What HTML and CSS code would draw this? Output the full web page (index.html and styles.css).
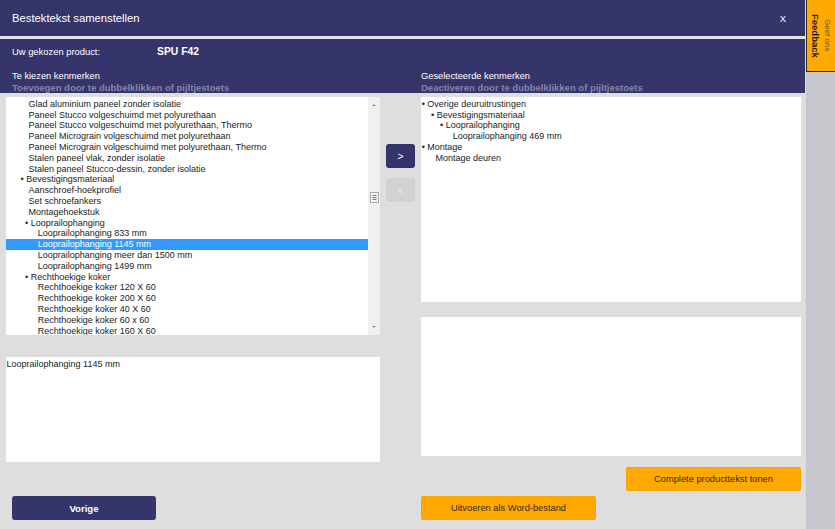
FILE: index.html
```html
<!DOCTYPE html>
<html lang="nl">
<head>
<meta charset="utf-8">
<title>Bestektekst samenstellen</title>
<link rel="stylesheet" href="styles.css">
</head>
<body>
<div class="app">
  <main class="dialog">
    <header class="titlebar">
      <span class="title">Bestektekst samenstellen</span>
      <span class="close">X</span>
    </header>
    <div class="titlesep"></div>
    <section class="infobar">
      <div class="product">
        <span class="product-label">Uw gekozen product:</span>
        <span class="product-name">SPU F42</span>
      </div>
      <div class="labels">
        <div class="label-col">
          <div class="label-main">Te kiezen kenmerken</div>
          <div class="label-hint">Toevoegen door te dubbelklikken of pijltjestoets</div>
        </div>
        <div class="label-col">
          <div class="label-main">Geselecteerde kenmerken</div>
          <div class="label-hint">Deactiveren door te dubbelklikken of pijltjestoets</div>
        </div>
      </div>
    </section>
    <section class="content">
      <div class="col-left">
        <div class="listbox">
          <ul class="tree">
            <li class="ind-e">Glad aluminium paneel zonder isolatie</li>
            <li class="ind-e">Paneel Stucco volgeschuimd met polyurethaan</li>
            <li class="ind-e">Paneel Stucco volgeschuimd met polyurethaan, Thermo</li>
            <li class="ind-e">Paneel Micrograin volgeschuimd met polyurethaan</li>
            <li class="ind-e">Paneel Micrograin volgeschuimd met polyurethaan, Thermo</li>
            <li class="ind-e">Stalen paneel vlak, zonder isolatie</li>
            <li class="ind-e">Stalen paneel Stucco-dessin, zonder isolatie</li>
            <li class="ind-c">• Bevestigingsmateriaal</li>
            <li class="ind-e">Aanschroef-hoekprofiel</li>
            <li class="ind-e">Set schroefankers</li>
            <li class="ind-e">Montagehoekstuk</li>
            <li class="ind-d">• Looprailophanging</li>
            <li class="ind-f">Looprailophanging 833 mm</li>
            <li class="ind-f selected">Looprailophanging 1145 mm</li>
            <li class="ind-f">Looprailophanging meer dan 1500 mm</li>
            <li class="ind-f">Looprailophanging 1499 mm</li>
            <li class="ind-d">• Rechthoekige koker</li>
            <li class="ind-f">Rechthoekige koker 120 X 60</li>
            <li class="ind-f">Rechthoekige koker 200 X 60</li>
            <li class="ind-f">Rechthoekige koker 40 X 60</li>
            <li class="ind-f">Rechthoekige koker 60 x 60</li>
            <li class="ind-f">Rechthoekige koker 160 X 60</li>
          </ul>
          <div class="scrollbar">
            <div class="sb-btn"><span class="tri-up"></span></div>
            <div class="sb-track">
              <svg class="sb-thumb" width="9" height="11" viewBox="0 0 9 11">
                <rect x="0.5" y="0.5" width="8" height="10" fill="#f4f4f4" stroke="#a8a8a8"/>
                <path d="M2.5 3.5h4M2.5 5.5h4M2.5 7.5h4" stroke="#777" stroke-width="1"/>
              </svg>
            </div>
            <div class="sb-btn"><span class="tri-down"></span></div>
          </div>
        </div>
        <div class="textbox">Looprailophanging 1145 mm</div>
        <button class="btn btn-navy btn-prev">Vorige</button>
      </div>
      <div class="col-mid">
        <button class="arrow arrow-add">&gt;</button>
        <button class="arrow arrow-remove" disabled>&lt;</button>
      </div>
      <div class="col-right">
        <ul class="tree tree-selected">
          <li class="ind-a">• Overige deuruitrustingen</li>
          <li class="ind-b">• Bevestigingsmateriaal</li>
          <li class="ind-d">• Looprailophanging</li>
          <li class="ind-f">Looprailophanging 469 mm</li>
          <li class="ind-a">• Montage</li>
          <li class="ind-c">Montage deuren</li>
        </ul>
        <div class="box"></div>
        <button class="btn btn-orange btn-complete">Complete producttekst tonen</button>
        <button class="btn btn-orange btn-word">Uitvoeren als Word-bestand</button>
      </div>
    </section>
  </main>
  <aside class="sidebar">
    <div class="feedback">
      <span class="fb-small">Geef ons</span>
      <span class="fb-big">Feedback</span>
    </div>
  </aside>
</div>
</body>
</html>
```

FILE: styles.css
```css
* {
  box-sizing: border-box;
  margin: 0;
  padding: 0;
}

html, body {
  width: 835px;
  height: 529px;
  overflow: hidden;
}

body {
  font-family: "Liberation Sans", Arial, sans-serif;
  background: #dedede;
  color: #222;
}

.app {
  display: flex;
  height: 529px;
}

.dialog {
  width: 805px;
  display: flex;
  flex-direction: column;
}

/* Title bar */
.titlebar {
  height: 36px;
  background: #35346b;
  color: #fff;
  display: flex;
  align-items: center;
  justify-content: space-between;
  padding: 0 19px 0 12px;
}

.title {
  font-size: 11.25px;
}

.close {
  font-size: 9.5px;
}

.titlesep {
  height: 3px;
  background: #e2e2e6;
}

/* Info band */
.infobar {
  height: 54px;
  background: #35346b;
  color: #fff;
  padding: 6px 0 0 12px;
}

.product {
  display: flex;
  height: 13px;
  line-height: 13px;
  font-size: 9.4px;
}

.product-label {
  width: 145px;
}

.product-name {
  font-weight: bold;
  font-size: 10.35px;
}

.labels {
  display: grid;
  grid-template-columns: 409px 1fr;
  margin-top: 12.5px;
}

.label-main {
  font-size: 9.3px;
  line-height: 11px;
}

.label-hint {
  font-size: 9.5px;
  line-height: 11px;
  font-weight: bold;
  color: #8584a6;
}

/* Content */
.content {
  flex: 1;
  display: grid;
  grid-template-columns: 375px 40px 380px;
  padding: 4px 0 0 6px;
  align-items: start;
}

.col-left,
.col-mid,
.col-right {
  display: flex;
  flex-direction: column;
  align-items: flex-start;
}

.listbox {
  width: 374px;
  height: 238px;
  display: flex;
  background: #fff;
}

.tree {
  list-style: none;
  background: #fff;
  font-size: 9px;
  line-height: 10.8px;
  padding-top: 1.8px;
  overflow: hidden;
  white-space: nowrap;
  color: #222;
}

.listbox .tree {
  width: 362px;
  flex: none;
}

.tree li {
  height: 10.8px;
}

.tree li.selected {
  background: #3399ff;
  color: #fff;
}

.ind-a { padding-left: 0.7px; }
.ind-b { padding-left: 10px; }
.ind-c { padding-left: 14.5px; }
.ind-d { padding-left: 19px; }
.ind-e { padding-left: 22.5px; }
.ind-f { padding-left: 31.7px; }

/* Scrollbar */
.scrollbar {
  width: 12px;
  display: flex;
  flex-direction: column;
  background: #f0f0f0;
}

.sb-btn {
  height: 16px;
  display: flex;
  align-items: center;
  justify-content: center;
}

.tri-up,
.tri-down {
  width: 0;
  height: 0;
  border-left: 2px solid transparent;
  border-right: 2px solid transparent;
}

.tri-up {
  border-bottom: 2px solid #8a8a8a;
}

.tri-down {
  border-top: 2px solid #8a8a8a;
}

.sb-track {
  flex: 1;
  padding: 79px 0 0 1.5px;
}

.sb-thumb {
  display: block;
}

.textbox {
  margin-top: 22px;
  width: 374px;
  height: 105px;
  background: #fff;
  font-size: 9px;
  line-height: 11px;
  padding: 2px 0 0 0.5px;
}

/* Buttons */
.btn {
  font: inherit;
  border: none;
  border-radius: 3px;
  height: 24px;
  cursor: pointer;
}

.btn-navy {
  background: #35346b;
  color: #fff;
  font-weight: bold;
  font-size: 9.6px;
}

.btn-orange {
  background: #ffa900;
  color: #3a2a00;
  font-size: 9.3px;
  box-shadow: inset 0 0 0 1px #f7a500;
}

.btn-prev {
  margin: 34px 0 0 6px;
  width: 144px;
}

.col-mid {
  padding-left: 5px;
}

.arrow {
  font: inherit;
  width: 29px;
  height: 24px;
  border: none;
  border-radius: 3px;
  font-size: 10px;
}

.arrow-add {
  margin-top: 47px;
  background: #35346b;
  color: #fff;
}

.arrow-remove {
  margin-top: 10px;
  background: #d2d2d2;
  color: #ececec;
}

.tree-selected {
  width: 380px;
  height: 205px;
}

.box {
  margin-top: 15px;
  width: 380px;
  height: 139px;
  background: #fff;
}

.btn-complete {
  align-self: flex-end;
  margin-top: 11px;
  width: 175px;
}

.btn-word {
  margin-top: 5px;
  width: 175px;
}

/* Sidebar & feedback tab */
.sidebar {
  width: 30px;
  background: #c5c7cc;
  border-left: 1px solid #d9d9dc;
}

.feedback {
  writing-mode: vertical-rl;
  width: 29px;
  height: 72px;
  background: #ffaa00;
  border-left: 1.5px solid #2e2b22;
  border-bottom: 1px solid #2e2b22;
  padding-right: 2px;
  text-align: center;
}

.fb-small,
.fb-big {
  display: block;
  line-height: 12px;
}

.fb-small {
  font-size: 8px;
  color: #6b5a20;
}

.fb-big {
  font-size: 9.5px;
  font-weight: bold;
  color: #1f1d18;
}
```
